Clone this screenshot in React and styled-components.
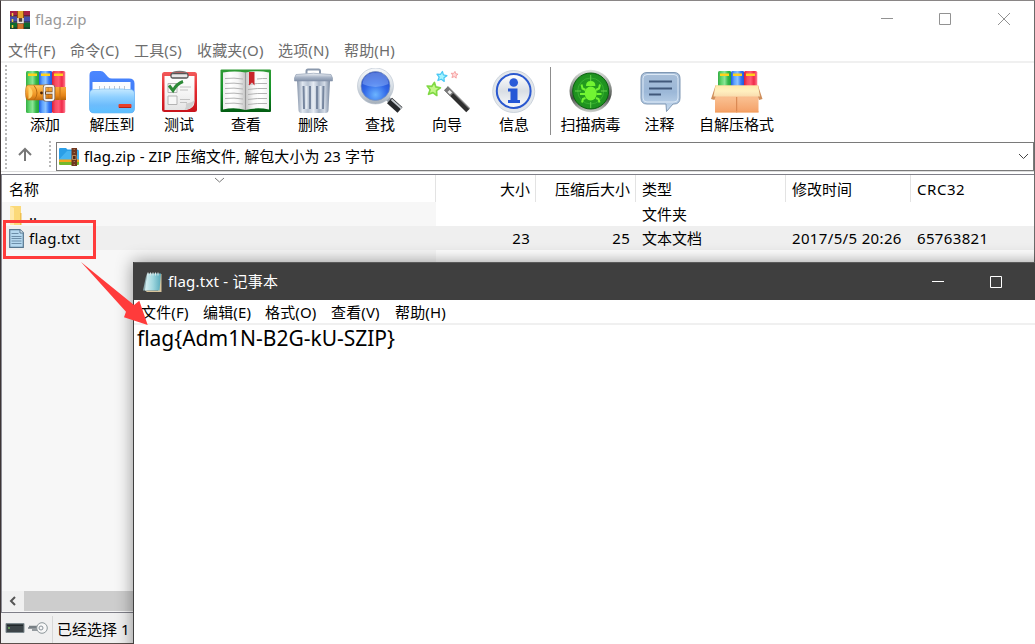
import React from 'react';
import styled, { createGlobalStyle } from 'styled-components';

const GlobalStyle = createGlobalStyle`
  * { box-sizing: border-box; }
  body { margin: 0; background: #fff; }
`;

const Desktop = styled.div`
  position: relative;
  width: 1035px;
  height: 644px;
  overflow: hidden;
  font-family: "Noto Sans", "Noto Sans CJK SC", sans-serif;
  font-size: 15px;
  line-height: 20px;
  color: #000;
  white-space: pre;
`;

const ArchiveWindow = styled.main`
  width: 1035px;
  height: 644px;
  display: flex;
  flex-direction: column;
  background: #fff;
  border-left: 1px solid #3d3536;
  border-top: 1px solid #8a8686;
  border-right: 1px solid #6a6a6a;
  border-bottom: 1px solid #5c504c;
`;

const Label = styled.span`
  letter-spacing: ${(p) => p.$track || 0}px;
  margin-left: ${(p) => p.$left || 0}px;
  padding-bottom: ${(p) => p.$lift || 0}px;
`;

const TitleBar = styled.header`
  height: 36px;
  display: flex;
  align-items: center;
  padding-left: 9px;
  color: #999;
  svg { flex: none; }
`;

const WindowButtons = styled.div`
  margin-left: auto;
  display: flex;
  svg { display: block; }
`;

const MenuBar = styled.nav`
  height: 26px;
  display: flex;
  align-items: center;
  padding: 2px 0 0 7px;
  gap: 14px;
  color: #6d6d6d;
  border-bottom: 2px solid #f0f0f0;
`;

const MenuItem = styled.span`
  flex: none;
  width: ${(p) => p.$width}px;
  letter-spacing: 0.15px;
`;

const Toolbar = styled.section`
  height: 74px;
  display: flex;
  padding-left: 4px;
`;

const Grip = styled.i`
  width: 2px;
  height: ${(p) => p.$height}px;
  margin-top: ${(p) => p.$top || 0}px;
  flex: none;
  background: repeating-linear-gradient(#b9b9b9 0 2px, #fff 2px 4px);
`;

const ToolButton = styled.div`
  width: ${(p) => p.$width || 67}px;
  flex: none;
  display: flex;
  flex-direction: column;
  align-items: center;
  padding-top: 5px;
  svg { display: block; flex: none; }
`;

const ToolGroup = styled.div`
  display: flex;
  margin-left: ${(p) => p.$left}px;
`;

const ToolSeparator = styled.i`
  width: 1px;
  height: 68px;
  margin: 4px 0 0 2px;
  background: #8d8d8d;
`;

const AddressRow = styled.section`
  height: 35px;
  display: flex;
  padding-left: 4px;
  border-bottom: 1px solid #ddd;
`;

const UpButton = styled.div`
  width: 42px;
  display: flex;
  justify-content: center;
  padding: 10px 6px 0 0;
`;

const AddressBox = styled.div`
  flex: 1;
  height: 29px;
  margin: 5px 0 0 5px;
  border: 1px solid #7a7a7a;
  display: flex;
  align-items: center;
  padding: 0 4px 1px 2px;
`;

const DropArrow = styled.svg`
  margin-left: auto;
`;

const FileList = styled.section`
  flex: 1;
  margin-top: 2px;
  border-top: 1px solid #7f7f88;
  border-left: 1px solid #8a8a92;
  display: flex;
  flex-direction: column;
  background: linear-gradient(90deg, #f7f7f7 0 434px, #fff 434px);
`;

const Row = styled.div`
  height: ${(p) => (p.$head ? 27 : 24)}px;
  flex: none;
  display: grid;
  grid-template-columns: 434px 100px 100px 150px 125px 1fr;
  background: ${(p) => (p.$head ? '#fff' : p.$selected ? '#efefef' : 'transparent')};
`;

const Cell = styled.div`
  display: flex;
  align-items: center;
  justify-content: ${(p) => (p.$end ? 'flex-end' : 'flex-start')};
  padding: 0 ${(p) => (p.$end ? 5 : 0)}px 0 ${(p) => p.$pad ?? 6}px;
  border-right: ${(p) => (p.$divider ? '1px solid #e3e3e3' : '1px solid transparent')};
  letter-spacing: ${(p) => p.$track || 0}px;
  position: relative;
`;

const SortMark = styled.svg`
  position: absolute;
  left: 212px;
  top: 2px;
`;

const ScrollBar = styled.div`
  height: 20px;
  margin: auto 0 1px;
  display: flex;
  background: #f0f0f0;
`;

const ScrollThumb = styled.i`
  width: 620px;
  background: #cdcdcd;
`;

const StatusBar = styled.footer`
  height: 31px;
  border-top: 1px solid #7f7f88;
  background: #f0f0f0;
  display: flex;
  align-items: center;
  padding: 2px 0 0 4px;
`;

const StatusDivider = styled.i`
  width: 1px;
  height: 27px;
  margin: 0 4px 0 4px;
  background: #d7d7d7;
`;

const Notepad = styled.aside`
  position: absolute;
  left: 133px;
  top: 262px;
  width: 960px;
  height: 420px;
  background: #fff;
  border-left: 1px solid #3f3f3f;
  box-shadow: 0 0 16px rgba(0, 0, 0, 0.42);
`;

const NoteTitle = styled.header`
  height: 38px;
  background: #3f3f3f;
  border-top: 1px solid #5a5a5a;
  color: #fff;
  display: flex;
  align-items: center;
  padding: 0 90px 0 9px;
`;

const NoteMenu = styled.nav`
  height: 25px;
  display: flex;
  align-items: center;
  gap: 14px;
  padding: 1px 0 0 7px;
  border-bottom: 2px solid #f0f0f0;
`;

const NoteText = styled.div`
  padding-left: 3px;
  font-size: 21px;
  line-height: 27px;
  letter-spacing: -0.02px;
`;

const Highlight = styled.div`
  position: absolute;
  left: 3px;
  top: 220px;
  width: 93px;
  height: 39px;
  border: 3px solid #ff3b3b;
`;

const Arrow = styled.svg`
  position: absolute;
  left: 76px;
  top: 258px;
`;

const Gradient = ({ id, stops, across }) => (
  <linearGradient id={id} x1="0" y1="0" x2={across ? 1 : 0} y2={across ? 0 : 1}>
    {stops.map((c, i) => (
      <stop key={i} offset={i / (stops.length - 1)} stopColor={c} />
    ))}
  </linearGradient>
);

const Icon = ({ children }) => (
  <svg width="54" height="46" viewBox="0 0 54 46">{children}</svg>
);

const Books = ({ id, top, bottom }) => (
  <>
    <defs>
      <Gradient id={`${id}g`} across stops={['#35ad42', '#5fd56e', '#8be596', '#35b84a', '#23a038']} />
      <Gradient id={`${id}b`} across stops={['#1f5ce0', '#5ea4ff', '#8cc4ff', '#3478f4', '#1f55d8']} />
      <Gradient id={`${id}r`} across stops={['#e01c34', '#f64c64', '#ff5a74', '#f02a48', '#ff7c92']} />
    </defs>
    <rect x="8" y={top} width="13.3" height={bottom - top} rx="1.5" fill={`url(#${id}g)`} />
    <rect x="21" y={top} width="13.3" height={bottom - top} rx="1.5" fill={`url(#${id}b)`} />
    <rect x="34" y={top} width="13.3" height={bottom - top} rx="1.5" fill={`url(#${id}r)`} />
    <path d={`M10 ${top + 3.8}h9M23 ${top + 3.8}h9M36 ${top + 3.8}h9`} stroke="#ffd21c" strokeWidth="2.4" />
  </>
);

const AddIcon = () => (
  <Icon>
    <Books id="add" top={3} bottom={45} />
    <defs>
      <Gradient id="belt" stops={['#f7a93e', '#f29a2c', '#e58418', '#b86408']} />
      <Gradient id="tongue" stops={['#ffc860', '#f8ac3c', '#ee9424', '#c87010']} />
    </defs>
    <path d="M29 19h19v13H29z" fill="url(#belt)" />
    <path d="M37 19v13M42 19v13" stroke="#c8761a" strokeWidth="1.200" />
    <path d="M10 17h20v15H10q-2.500 0-2.500-7.500T10 17z" fill="url(#tongue)" stroke="#b86a10" strokeWidth=".6" />
    <path d="M16 17.500q3 3.500 3 7.500t-3 7" fill="none" stroke="#b86a10" />
    <path d="M10.500 18.500q4 2 4 6.500t-4 6z" fill="#ffd36c" />
    <circle cx="23.500" cy="25" r="1.400" fill="#4b2204" />
    <rect x="26.500" y="18" width="9" height="14" rx="1.500" fill="none" stroke="#7d6658" strokeWidth="3.200" />
    <rect x="26.500" y="18" width="9" height="14" rx="1.500" fill="none" stroke="#f7f2ec" strokeWidth="1.800" />
    <path d="M27 25h7" stroke="#6b4420" strokeWidth="3" />
    <path d="M28 25h7" stroke="#efe8de" strokeWidth="1.600" />
  </Icon>
);

const ExtractIcon = () => (
  <Icon>
    <defs>
      <Gradient id="fback" stops={['#4b86ff', '#3f7df8', '#4c9cf8']} />
      <Gradient id="ffront" stops={['#c5e9ff', '#8fd0ff', '#6dbcfc', '#5cc0ff']} />
    </defs>
    <path d="M4.500 41V7q0-4 4-4h7q2.500 0 4 2l3.500 4q1.500 1.500 4 1.500h17q5.500 0 5.500 5V41q0 4-4 4H9q-4.500 0-4.500-4z" fill="url(#fback)" />
    <path d="M7.500 14h38v10h-38z" fill="#fafcff" />
    <path d="M14.500 18v4M19.500 18v4M24.500 18v4M29.500 18v4M34.500 18v4M39.500 18v4" stroke="#bfc5cd" />
    <path d="M4.500 26q0-4.500 4.500-4.500h4q2 0 3-.5h22q1 .5 3 .5h4q4.500 0 4.500 4.500v14q0 5-5 5H9.500q-5 0-5-5z" fill="url(#ffront)" stroke="#6ab5f2" strokeWidth=".6" />
    <rect x="33.500" y="36" width="13" height="4" rx="1" fill="#e8402a" />
    <path d="M34 39.500h12" stroke="#b52315" />
  </Icon>
);

const TestIcon = () => (
  <Icon>
    <defs>
      <Gradient id="clip" stops={['#f25a5a', '#e2272c', '#c8141c']} />
      <Gradient id="page" stops={['#fff', '#f5f5f5', '#e4e4e4']} />
    </defs>
    <rect x="10" y="4" width="35" height="40" rx="2.500" fill="url(#clip)" />
    <path d="M12.500 8h30v26q0 6-8 8h-22z" fill="url(#page)" />
    <path d="M42.500 32q-1 9-10 10 2-3 1.500-7 5 1 8.500-3z" fill="#cfcfcf" />
    <rect x="19" y="5.500" width="17" height="4.500" rx="1.500" fill="#e8e8e8" stroke="#555" strokeWidth="1.300" />
    <path d="M20.500 5.500q0-2 7-2t7 2" fill="none" stroke="#777" strokeWidth="1.300" />
    <path d="M16 15.500h9v9h-9zM16 28h9v8.500h-9z" fill="#f7f7f7" stroke="#b3b3b3" />
    <path d="M28 19h11M28 22h8M28 31.500h10M28 34.500h7" stroke="#c2c2c2" />
    <path d="M17 17.500l4 5q4-7 10-9" fill="none" stroke="#2d8a38" strokeWidth="3" />
  </Icon>
);

const ViewIcon = () => (
  <Icon>
    <defs>
      <Gradient id="cover" stops={['#2f9a35', '#149428', '#025c12']} />
      <Gradient id="leaf" across stops={['#ececec', '#fff', '#f5f5f5', '#c4c4c4']} />
      <Gradient id="leaf2" across stops={['#c4c4c4', '#f7f7f7', '#fff', '#f0f0f0']} />
    </defs>
    <rect x="1.500" y="1.500" width="50.500" height="42.500" rx="1" fill="url(#cover)" />
    <path d="M4 4.500q12-2 22.500 0v37.500q-11-3-22.500-.5z" fill="url(#leaf)" />
    <path d="M26.500 4.500q12-2.500 23.500 0V41.500q-12-2.500-23.500.5z" fill="url(#leaf2)" />
    <path d="M26.500 5v37" stroke="#999" />
    <path d="M6 10.500q9-1 18 .5M6 15.500q9-1 18 .5M6 20.500q9-1 18 .5M6 25.500q9-1 18 .5M6 30.500q9-1 18 .5M6 35.500q9-1 18 .5M38 11q6-.7 10-.5M29 16.500q9-1.500 19-1M29 21.500q9-1.500 19-1M29 26.500q9-1.500 19-1M29 31.500q9-1.500 19-1M29 36.500q9-1.500 19-1" fill="none" stroke="#b3b3b3" />
    <path d="M30 4h5.500v13.500L33 14.500l-3 3z" fill="#c8242b" />
  </Icon>
);

const DeleteIcon = () => (
  <Icon>
    <defs>
      <Gradient id="can" across stops={['#8795aa', '#dfe6ef', '#b6c2d2', '#e6ebf3', '#a5b2c5', '#d3dbe6', '#7888a0']} />
      <Gradient id="lid" stops={['#f1f4f8', '#aab6c8', '#8190a8']} />
    </defs>
    <path d="M20.500 7V3q0-1.500 1.500-1.500h10.500q1.500 0 1.500 1.500v4" fill="none" stroke="#8b99ad" strokeWidth="2" />
    <path d="M11 13h33l-1.500 29q0 3-3 3h-24q-3 0-3-3z" fill="url(#can)" />
    <path d="M17.500 18l.5 23M24 18v23M31 18v23M37.500 18l-.5 23" stroke="#76869f" strokeWidth="2" />
    <path d="M20.500 18v23M27.500 18v23M34.500 18v23" stroke="#e5ebf2" strokeWidth="2" />
    <path d="M10 6.500q17.500-2.500 35 0l1.500 3.500v3h-38v-3z" fill="url(#lid)" stroke="#8795ab" strokeWidth=".6" />
  </Icon>
);

const FindIcon = () => (
  <Icon>
    <defs>
      <radialGradient id="lens" cx=".5" cy=".8" r=".8">
        <stop offset="0" stopColor="#6cb4ff" />
        <stop offset=".5" stopColor="#3168e8" />
        <stop offset="1" stopColor="#2143c0" />
      </radialGradient>
      <Gradient id="rim" stops={['#f6f8fa', '#d9e0e7', '#a4aeba']} />
    </defs>
    <path d="M33 29l6 5.500" stroke="#9aa3ad" strokeWidth="5" />
    <path d="M36.500 32.500L47 42" stroke="#26282b" strokeWidth="7.500" />
    <path d="M38.500 31.500l10 9" stroke="#c4c9ce" strokeWidth="1.800" />
    <circle cx="22.500" cy="18" r="18" fill="url(#rim)" stroke="#b5c0cc" strokeWidth=".6" />
    <circle cx="22.500" cy="18" r="14.500" fill="url(#lens)" stroke="#7d94b8" strokeWidth=".7" />
    <path d="M9.500 16q1-11 13-11.500t13 11.500q-6 3-13 3t-13-3z" fill="#a8c8ff" opacity=".4" />
  </Icon>
);

const Star = ({ x, y, size, fill, stroke }) => (
  <path
    transform={`translate(${x} ${y}) rotate(8) scale(${size / 10})`}
    d="M0-9.500L2.800-3.500 9.500-3 4.600 1.700 6 8.500 0 5.200-6 8.500-4.600 1.700-9.500-3-2.800-3.500z"
    fill={fill}
    stroke={stroke}
    strokeWidth="2.400"
    strokeLinejoin="round"
  />
);

const WizardIcon = () => (
  <Icon>
    <Star x={21.7} y={8.5} size={5.3} fill="#a5f5ff" stroke="#4cc8f4" />
    <Star x={34.5} y={6.8} size={3.6} fill="#ffdada" stroke="#f49a9a" />
    <Star x={13.5} y={21} size={7} fill="#c4f88a" stroke="#80d944" />
    <path d="M26 20.500l22 22" stroke="#2f2f2f" strokeWidth="5" />
    <path d="M27.500 18.500l22 22" stroke="#8a8a8a" strokeWidth="1.200" />
    <path d="M26 20.500l6 6" stroke="#777" strokeWidth="5" />
    <path d="M28.500 23l2.500 2.500" stroke="#ececec" strokeWidth="3" />
  </Icon>
);

const InfoIcon = () => (
  <Icon>
    <defs><Gradient id="disc" stops={['#fff', '#d9dee4', '#fbfcfd']} /></defs>
    <circle cx="26.700" cy="23.500" r="21" fill="#e3e7eb" stroke="#c3cbd5" strokeWidth=".8" />
    <circle cx="26.700" cy="23" r="16.900" fill="url(#disc)" stroke="#2a58cf" strokeWidth="2" />
    <circle cx="26.700" cy="14.500" r="4.300" fill="#2a5bd8" />
    <path d="M21 20.500h9.500V32h2.500v3H21v-3h2.500v-8.500H21z" fill="#2557d6" />
  </Icon>
);

const VirusIcon = () => (
  <Icon>
    <defs>
      <Gradient id="steel" stops={['#e2e6e2', '#9ba09b', '#4b504b', '#cfd3cf']} />
      <radialGradient id="radar"><stop offset="0" stopColor="#2aa51c" /><stop offset="1" stopColor="#1d9020" /></radialGradient>
    </defs>
    <circle cx="26.700" cy="23" r="21.200" fill="url(#steel)" />
    <circle cx="26.700" cy="23" r="18" fill="url(#radar)" stroke="#0b5f10" />
    <circle cx="26.700" cy="23" r="13" fill="none" stroke="#3bb535" strokeWidth=".8" />
    <path d="M26.700 7v6M26.700 34v6M11 23h6M37 23h6" stroke="#66d24a" strokeWidth="1" />
    <ellipse cx="26.700" cy="25.500" rx="6" ry="7" fill="#72f432" />
    <path d="M22 18q0-5 4.700-5t4.700 5z" fill="#72f432" />
    <path d="M21.500 22l-3-1.500-1-4M32 22l3-1.500 1-4M21 26h-5M32.500 26h5M21.500 30l-2.500 1-1 3.500M32 30l2.500 1 1 3.500" fill="none" stroke="#72f432" strokeWidth="2" />
  </Icon>
);

const CommentIcon = () => (
  <Icon>
    <defs><Gradient id="bubble" stops={['#a9bfd8', '#9cb8d8', '#c9dcef']} /></defs>
    <path d="M14 4.500h27q6 0 6 6V30q0 6-6 6h-1l-6.500 7.500L33 36H14q-6 0-6-6V10.500q0-6 6-6z" fill="url(#bubble)" stroke="#8098b4" />
    <path d="M14 6.500h27q4 0 4 4V30q0 4-4 4H14q-4 0-4-4V10.500q0-4 4-4z" fill="none" stroke="#dce8f5" />
    <path d="M16 13.500h23M16 20.500h23M16 26.500h12" stroke="#41587a" strokeWidth="2" />
  </Icon>
);

const SfxIcon = () => (
  <Icon>
    <Books id="sfx" top={3} bottom={20} />
    <defs>
      <Gradient id="carton" stops={['#f8c090', '#f9bd8d', '#f4a067']} />
      <Gradient id="flap" stops={['#ffe9a8', '#fff0c0', '#f9dcae']} />
    </defs>
    <path d="M5 17.500h43.500V44.500H5z" fill="url(#carton)" />
    <path d="M5.500 17.500L1 31l3.500 1 3-10zM48 17.500L52.500 31l-3.500 1-3-10z" fill="#d08f5c" />
    <path d="M5.500 17.500H48L50 28.500H3.500z" fill="url(#flap)" />
    <path d="M26.700 29v15.500" stroke="#d4804b" />
    <path d="M5 43.800h43.500" stroke="#f2a05f" />
  </Icon>
);

const RarIcon = () => (
  <svg width="20" height="19" viewBox="0 0 20 19">
    <path d="M0 1h20v5.500H0z" fill="#a82045" />
    <path d="M0 6.500h20v6H0z" fill="#4450ad" />
    <path d="M0 12.500h20V19H0z" fill="#0e6b2e" />
    <path d="M0 6h20M0 12h20M0 18h20" stroke="#26222f" />
    <path d="M2.500 3v3M2.500 9v3M2.500 15v3" stroke="#f3cf3e" strokeWidth="1.500" />
    <path d="M7 1h7v18H7z" fill="#8f4a18" />
    <path d="M8 1h5v7H8z" fill="#e4a32e" />
    <path d="M7 8.500h7v5H7z" fill="#494039" />
    <path d="M8 8v4.500h5V8" fill="none" stroke="#f2efe9" strokeWidth="1.500" />
    <path d="M8 14h5v5H8z" fill="#cf742e" />
  </svg>
);

const ZipIcon = () => (
  <svg width="21" height="19" viewBox="0 0 21 19">
    <path d="M0 2q0-1 1-1h6l1.500 1.500H18q2 0 2 2V13H0z" fill="#2b9fe8" />
    <path d="M0 12.500L8 4h12v9H0z" fill="#52bdf7" opacity=".7" />
    <path d="M0 12.500h20V15H0z" fill="#f4a51c" />
    <path d="M0 15h20v2q0 1-1 1H1q-1 0-1-1z" fill="#73b82b" />
    <path d="M12.500 1H18v18h-5.500z" fill="#6f3720" />
    <path d="M15.200 2v16" stroke="#b98a65" strokeDasharray="1 2" />
    <path d="M13.500 8.500h3.500v4h-3.500z" fill="#51271a" stroke="#d9aa70" strokeWidth=".7" />
  </svg>
);

const FolderIcon = () => (
  <svg width="14" height="21" viewBox="0 0 14 21">
    <path d="M1 2h11v19H1z" fill="#fbd978" />
    <path d="M1 2l4 2v17H1z" fill="#ffe9a9" />
    <path d="M11 9h1.500v12H11z" fill="#efc04e" />
  </svg>
);

const TxtIcon = () => (
  <svg width="15" height="19" viewBox="0 0 15 19">
    <path d="M.7.7H11l3.300 3v14.600H.7z" fill="#b5d8ef" stroke="#55758e" strokeWidth="1.200" />
    <path d="M11 1v3h3.500" fill="#edf7fd" stroke="#55758e" />
    <path d="M2.500 4.500h7M2.500 7.500h10M2.500 9.500h10M2.500 12h10M2.500 14.500h10" stroke="#6c8ea9" />
  </svg>
);

const NotepadIcon = () => (
  <svg width="20" height="20" viewBox="0 0 20 20">
    <defs><Gradient id="pad" across stops={['#d8f0f3', '#9fd6de', '#58aabb']} /></defs>
    <path d="M3.500 2L0 18.500h4z" fill="#8cabb0" />
    <path d="M16 2h2.500v18H4l-2-1.500h13z" fill="#d8c49c" />
    <path d="M4 1.500h14L16.500 18.500H2z" fill="url(#pad)" />
    <path d="M5 .5v3M7.500.5v3M10 .5v3M12.500.5v3M15 .5v3" stroke="#d9e6e8" />
  </svg>
);

const tools = [
  ['添加', AddIcon],
  ['解压到', ExtractIcon],
  ['测试', TestIcon],
  ['查看', ViewIcon],
  ['删除', DeleteIcon],
  ['查找', FindIcon],
  ['向导', WizardIcon],
  ['信息', InfoIcon],
];

const extraTools = [
  ['扫描病毒', VirusIcon, 69],
  ['注释', CommentIcon, 69],
  ['自解压格式', SfxIcon, 85],
];

const archiveMenu = [['文件(F)', 48], ['命令(C)', 50], ['工具(S)', 49], ['收藏夹(O)', 67], ['选项(N)', 52], ['帮助(H)', 52]];
const noteMenu = [['文件(F)', 48], ['编辑(E)', 48], ['格式(O)', 52], ['查看(V)', 50], ['帮助(H)', 52]];

export default function App() {
  return (
    <>
      <GlobalStyle />
      <Desktop>
        <ArchiveWindow>
          <TitleBar>
            <RarIcon />
            <Label $left={5} $track={0.1}>flag.zip</Label>
            <WindowButtons>
              <svg width="154" height="36" viewBox="0 0 154 36" fill="none" stroke="#929292">
                <path d="M1 17.500h12M59.500 12.500h11v11h-11zM118 12l12 12M130 12l-12 12" />
              </svg>
            </WindowButtons>
          </TitleBar>
          <MenuBar>
            {archiveMenu.map(([text, width]) => <MenuItem key={text} $width={width}>{text}</MenuItem>)}
          </MenuBar>
          <Toolbar>
            <Grip $height={74} $top={2} />
            <ToolGroup $left={4.5}>
              {tools.map(([text, Glyph]) => (
                <ToolButton key={text}><Glyph /><span>{text}</span></ToolButton>
              ))}
            </ToolGroup>
            <ToolSeparator />
            <ToolGroup $left={5.5}>
              {extraTools.map(([text, Glyph, width]) => (
                <ToolButton key={text} $width={width}><Glyph /><span>{text}</span></ToolButton>
              ))}
            </ToolGroup>
          </Toolbar>
          <AddressRow>
            <Grip $height={30} $top={2} />
            <UpButton>
              <svg width="16" height="16" viewBox="0 0 16 16" fill="none" stroke="#777" strokeWidth="2">
                <path d="M8 14V2M2 8l6-6 6 6" />
              </svg>
            </UpButton>
            <Grip $height={28} $top={4} />
            <AddressBox>
              <ZipIcon />
              <Label $left={4} $track={0.1} $lift={1}>flag.zip - ZIP 压缩文件, 解包大小为 23 字节</Label>
              <DropArrow width="11" height="7" viewBox="0 0 11 7" fill="none" stroke="#444">
                <path d="M1 1l4.500 4.500L10 1" />
              </DropArrow>
            </AddressBox>
          </AddressRow>
          <FileList>
            <Row $head>
              <Cell $divider $pad={7}>
                名称
                <SortMark width="11" height="7" viewBox="0 0 11 7" fill="none" stroke="#777">
                  <path d="M1 1l4.500 4L10 1" />
                </SortMark>
              </Cell>
              <Cell $end $divider>大小</Cell>
              <Cell $end $divider>压缩后大小</Cell>
              <Cell $divider>类型</Cell>
              <Cell $divider>修改时间</Cell>
              <Cell $track={0.55}>CRC32</Cell>
            </Row>
            <Row>
              <Cell $pad={7}><FolderIcon /><Label $left={6}>..</Label></Cell>
              <Cell />
              <Cell />
              <Cell>文件夹</Cell>
            </Row>
            <Row $selected>
              <Cell $pad={7}><TxtIcon /><Label $left={5} $track={0.25}>flag.txt</Label></Cell>
              <Cell $end $track={0.25}>23</Cell>
              <Cell $end $track={0.25}>25</Cell>
              <Cell>文本文档</Cell>
              <Cell $track={0.35}>2017/5/5 20:26</Cell>
              <Cell $track={0.35}>65763821</Cell>
            </Row>
            <ScrollBar>
              <svg width="22" height="20" viewBox="0 0 22 20" fill="none" stroke="#555" strokeWidth="2">
                <path d="M13 6l-4 4 4 4" />
              </svg>
              <ScrollThumb />
            </ScrollBar>
          </FileList>
          <StatusBar>
            <svg width="43" height="18" viewBox="0 0 43 18">
              <path d="M1 3.500h18v9H1z" fill="#3c4448" stroke="#7d898e" />
              <path d="M2 5.500h16" stroke="#20282b" />
              <circle cx="4" cy="8" r="1" fill="#71b35e" />
              <path d="M24 6.500h10M23 8h11M27 10h7" stroke="#777f84" strokeWidth="1.600" />
              <circle cx="37" cy="8" r="5.300" fill="#f7f7f7" stroke="#8e979b" />
              <circle cx="36" cy="8" r="2" fill="none" stroke="#899299" />
            </svg>
            <StatusDivider />
            <Label>已经选择 1</Label>
          </StatusBar>
        </ArchiveWindow>

        <Notepad>
          <NoteTitle>
            <NotepadIcon />
            <Label $left={5} $track={0.22} $lift={2}>flag.txt - 记事本</Label>
            <WindowButtons>
              <svg width="71" height="36" viewBox="0 0 71 36" fill="none" stroke="#fff">
                <path d="M0 17.500h12M58.500 12.500h11v11h-11z" />
              </svg>
            </WindowButtons>
          </NoteTitle>
          <NoteMenu>
            {noteMenu.map(([text, width]) => <MenuItem key={text} $width={width}>{text}</MenuItem>)}
          </NoteMenu>
          <NoteText>{'flag{Adm1N-B2G-kU-SZIP}'}</NoteText>
        </Notepad>
        <Highlight />
        <Arrow width="76" height="72" viewBox="76 258 76 72">
          <path d="M81 262l53 43 5.300-4.300L147.700 325l-23.700-7.700 2-5.600z" fill="#ff3b3b" />
        </Arrow>
      </Desktop>
    </>
  );
}
